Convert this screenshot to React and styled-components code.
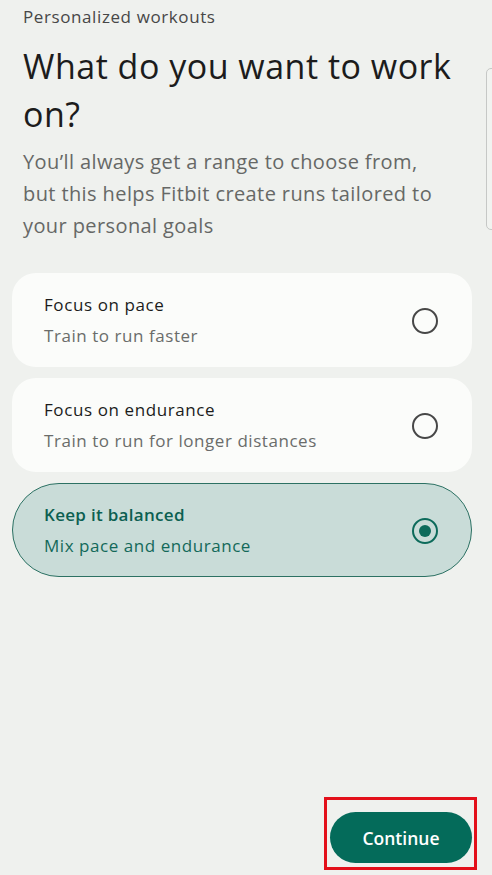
import { useState } from 'react';
import { styled, createGlobalStyle } from 'styled-components';

const GlobalStyle = createGlobalStyle`
  html, body {
    margin: 0;
    padding: 0;
    background: #eff1ee;
  }
  body {
    font-family: "Open Sans", Roboto, Arial, sans-serif;
    -webkit-font-smoothing: antialiased;
  }
`;

const Screen = styled.div`
  position: relative;
  min-height: 875px;
  display: flex;
  flex-direction: column;
  box-sizing: border-box;
`;

const Header = styled.div`
  padding: 5px 40px 0 23px;
`;

const Eyebrow = styled.div`
  font-size: 17px;
  line-height: 24px;
  color: #474747;
  letter-spacing: 0.6px;
`;

const Title = styled.h1`
  margin: 13px 0 0;
  font-size: 34px;
  font-weight: 400;
  line-height: 48px;
  color: #1c1c1c;
  letter-spacing: 0.5px;
`;

const Subtitle = styled.p`
  margin: 8px 0 0;
  font-size: 20px;
  line-height: 32px;
  color: #666866;
  letter-spacing: 0.4px;
`;

const Options = styled.div`
  display: flex;
  flex-direction: column;
  gap: 11px;
  padding: 31px 20px 0 12px;
`;

const Option = styled.button`
  display: flex;
  align-items: center;
  justify-content: space-between;
  height: 94px;
  box-sizing: border-box;
  padding: 0 33px 0 31px;
  border: 1px solid ${(p) => (p.$selected ? '#2c7163' : 'transparent')};
  border-radius: ${(p) => (p.$selected ? '47px' : '24px')};
  background: ${(p) => (p.$selected ? '#c9dcd8' : '#fbfcfa')};
  font-family: inherit;
  text-align: left;
  cursor: pointer;
`;

const OptionText = styled.div`
  display: flex;
  flex-direction: column;
  gap: 8px;
`;

const OptionTitle = styled.span`
  font-size: 17px;
  line-height: 23px;
  letter-spacing: ${(p) => (p.$selected ? '0.3px' : '0.6px')};
  color: ${(p) => (p.$selected ? '#0c5f51' : '#1c1c1c')};
  font-weight: ${(p) => (p.$selected ? 600 : 400)};
`;

const OptionSub = styled.span`
  font-size: 17px;
  line-height: 23px;
  letter-spacing: 0.55px;
  color: ${(p) => (p.$selected ? '#13695a' : '#6a6c6a')};
`;

const Radio = styled.span`
  width: 26px;
  height: 26px;
  margin-top: 2px;
  box-sizing: border-box;
  border-radius: 50%;
  border: 2.5px solid ${(p) => (p.$selected ? '#0d6b5b' : '#474747')};
  display: flex;
  align-items: center;
  justify-content: center;

  &::after {
    content: '';
    width: 12px;
    height: 12px;
    border-radius: 50%;
    background: #0d6b5b;
    display: ${(p) => (p.$selected ? 'block' : 'none')};
  }
`;

const Footer = styled.div`
  margin-top: auto;
  display: flex;
  justify-content: flex-end;
  padding: 0 15px 5px 0;
`;

const Highlight = styled.div`
  border: 3px solid #e3101a;
  padding: 12px 2px 4px 3px;
`;

const ContinueButton = styled.button`
  width: 142px;
  height: 51px;
  border: none;
  border-radius: 26px;
  background: #046b5a;
  color: #ffffff;
  font-family: inherit;
  font-size: 17.5px;
  font-weight: 600;
  cursor: pointer;
`;

const EdgeHandle = styled.div`
  position: absolute;
  top: 68px;
  right: -8px;
  width: 12px;
  height: 160px;
  border: 1px solid #c6c8c6;
  border-radius: 5px;
  background: #f1f3f0;
`;

const options = [
  { id: 'pace', title: 'Focus on pace', sub: 'Train to run faster' },
  { id: 'endurance', title: 'Focus on endurance', sub: 'Train to run for longer distances' },
  { id: 'balanced', title: 'Keep it balanced', sub: 'Mix pace and endurance' },
];

export default function App() {
  const [choice, setChoice] = useState('balanced');

  return (
    <>
      <GlobalStyle />
      <Screen>
        <EdgeHandle />
        <Header>
          <Eyebrow>Personalized workouts</Eyebrow>
          <Title>What do you want to work on?</Title>
          <Subtitle>
            You’ll always get a range to choose from, but this helps Fitbit create runs tailored to
            your personal goals
          </Subtitle>
        </Header>
        <Options>
          {options.map((o) => {
            const selected = choice === o.id;
            return (
              <Option key={o.id} $selected={selected} onClick={() => setChoice(o.id)}>
                <OptionText>
                  <OptionTitle $selected={selected}>{o.title}</OptionTitle>
                  <OptionSub $selected={selected}>{o.sub}</OptionSub>
                </OptionText>
                <Radio $selected={selected} />
              </Option>
            );
          })}
        </Options>
        <Footer>
          <Highlight>
            <ContinueButton>Continue</ContinueButton>
          </Highlight>
        </Footer>
      </Screen>
    </>
  );
}
